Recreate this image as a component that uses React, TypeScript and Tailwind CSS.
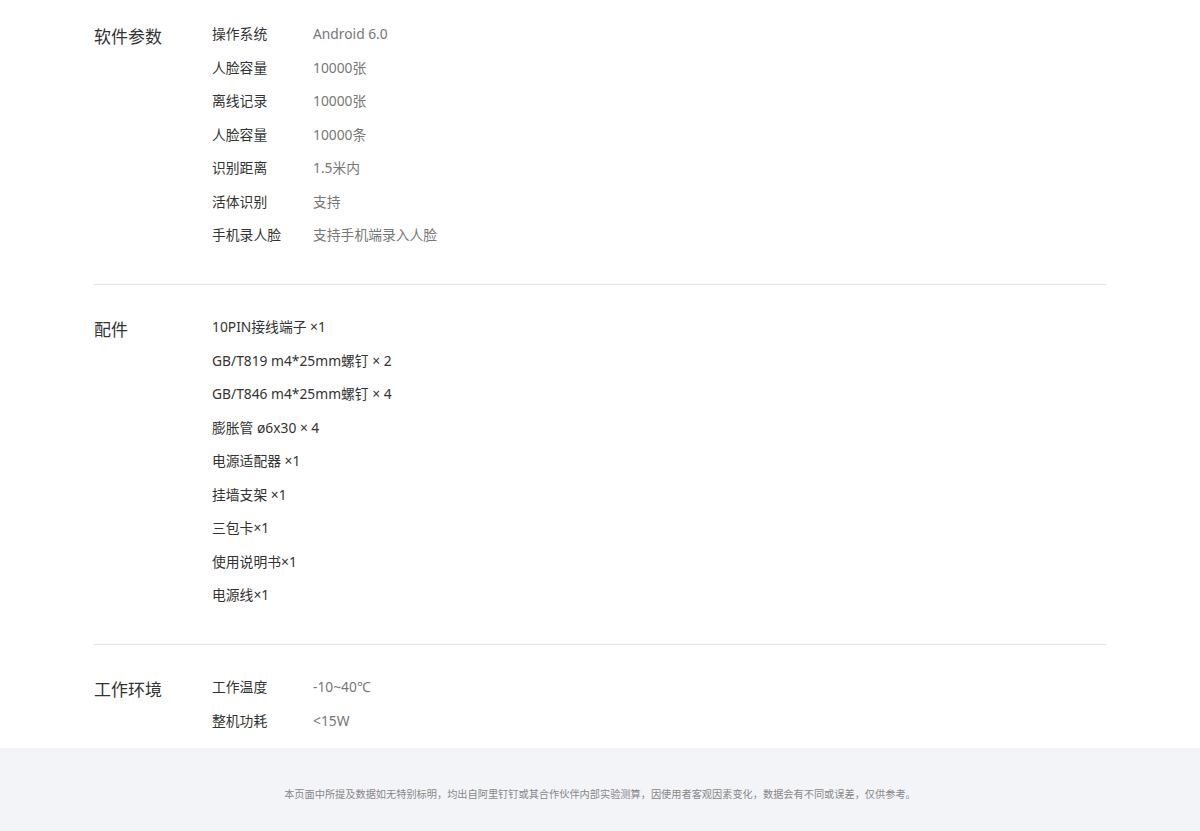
const software: [string, string][] = [
  ['操作系统', 'Android 6.0'],
  ['人脸容量', '10000张'],
  ['离线记录', '10000张'],
  ['人脸容量', '10000条'],
  ['识别距离', '1.5米内'],
  ['活体识别', '支持'],
  ['手机录人脸', '支持手机端录入人脸'],
];

const parts = [
  '10PIN接线端子 ×1',
  'GB/T819 m4*25mm螺钉 × 2',
  'GB/T846 m4*25mm螺钉 × 4',
  '膨胀管 ø6x30 × 4',
  '电源适配器 ×1',
  '挂墙支架 ×1',
  '三包卡×1',
  '使用说明书×1',
  '电源线×1',
];

const env: [string, string][] = [
  ['工作温度', '-10~40℃'],
  ['整机功耗', '<15W'],
];

function SpecRows({ rows }: { rows: [string, string][] }) {
  return (
    <div className="flex flex-col">
      {rows.map(([k, v], i) => (
        <div key={i} className="flex h-[33.5px] items-center text-[13.8px]">
          <span className="w-[101px] text-[#333]">{k}</span>
          <span className="text-[#777]">{v}</span>
        </div>
      ))}
    </div>
  );
}

function Section({
  title,
  className,
  children,
}: {
  title: string;
  className: string;
  children: React.ReactNode;
}) {
  return (
    <div className={`flex ${className}`}>
      <div className="w-[118px] shrink-0 pt-[2px] text-[17px] leading-[33.5px] text-[#333]">{title}</div>
      <div className="flex-1">{children}</div>
    </div>
  );
}

export default function App() {
  return (
    <div
      className="min-h-[831px] bg-white flex flex-col"
      style={{ fontFamily: '"Noto Sans", "Noto Sans CJK SC", sans-serif' }}
    >
      <div className="w-[1012px] mx-auto flex-1">
        <Section title="软件参数" className="pt-[18px] pb-[31.5px] border-b border-[#e3e3e3]">
          <SpecRows rows={software} />
        </Section>

        <Section title="配件" className="pt-[26px] pb-[31.5px] border-b border-[#e3e3e3]">
          <div className="flex flex-col">
            {parts.map((p, i) => (
              <div key={i} className="flex h-[33.5px] items-center text-[13.8px] text-[#333]">
                {p}
              </div>
            ))}
          </div>
        </Section>

        <Section title="工作环境" className="pt-[26px] pb-[10px]">
          <SpecRows rows={env} />
        </Section>
      </div>

      {/* footer note */}
      <div className="h-[83px] bg-[#f3f4f7] flex items-center justify-center pt-[11px]">
        <p className="text-[10.2px] text-[#888]">
          本页面中所提及数据如无特别标明，均出自阿里钉钉或其合作伙伴内部实验测算，因使用者客观因素变化，数据会有不同或误差，仅供参考。
        </p>
      </div>
    </div>
  );
}
